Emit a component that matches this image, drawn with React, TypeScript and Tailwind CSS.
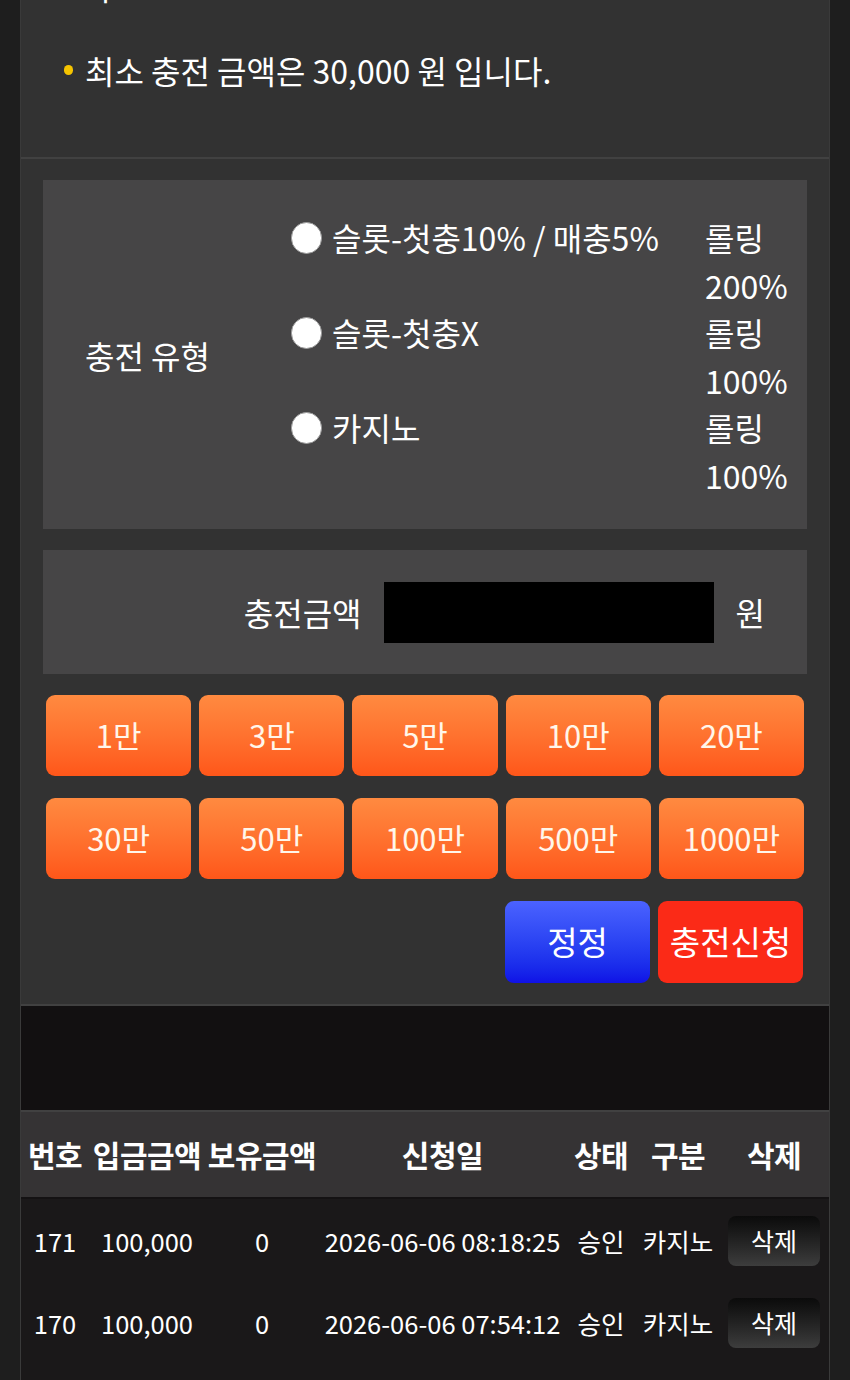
const amounts = ["1만", "3만", "5만", "10만", "20만", "30만", "50만", "100만", "500만", "1000만"];

const types = [
  { label: "슬롯-첫충10% / 매충5%", rolling: "200%" },
  { label: "슬롯-첫충X", rolling: "100%" },
  { label: "카지노", rolling: "100%" },
];

const rows = [
  { no: 171, amount: "100,000", balance: "0", date: "2026-06-06 08:18:25", status: "승인", kind: "카지노" },
  { no: 170, amount: "100,000", balance: "0", date: "2026-06-06 07:54:12", status: "승인", kind: "카지노" },
];

const cols = "grid grid-cols-[68px_116px_114px_247px_70px_84px_108px]";

export default function App() {
  return (
    <div className="min-h-[1380px] bg-[#1e1e1e] font-['Noto_Sans_CJK_KR',sans-serif] text-white overflow-hidden">
      <div className="ml-[20px] w-[810px] border-x border-[#3a3a3a]">
        {/* notice */}
        <div className="h-[157px] bg-[#323232] overflow-hidden">
          <p className="-mt-[36px] pl-[62px] text-[32px] leading-[44px]">다.</p>
          <div className="mt-[40px] flex items-center pl-[43px] gap-[12px]">
            <span className="w-[9px] h-[10px] rounded-full bg-[#f5c400]" />
            <span className="text-[32px] leading-[44px]">최소 충전 금액은 30,000 원 입니다.</span>
          </div>
        </div>

        {/* form */}
        <div className="bg-[#323232] border-t-2 border-b-2 border-[#414141] px-[22px] pt-[21px] pb-[21px]">
          <div className="h-[349px] bg-[#464546] flex items-center">
            <div className="w-[248px] pl-[42px] text-[32px]">충전 유형</div>
            <div className="flex flex-col pt-[4px]">
              {types.map((t) => (
                <div key={t.label} className="flex items-start text-[32px] leading-[47.5px]">
                  <div className="w-[414px] flex items-center gap-[10px] h-[47.5px]">
                    <span className="w-[31px] h-[32px] rounded-full bg-white border border-[#9a9a9a]" />
                    <span>{t.label}</span>
                  </div>
                  <div className="w-[90px]">
                    <div>롤링</div>
                    <div>{t.rolling}</div>
                  </div>
                </div>
              ))}
            </div>
          </div>

          <div className="mt-[21px] h-[124px] bg-[#464546] flex items-center justify-end pr-[42px] gap-[22px] text-[32px]">
            <span>충전금액</span>
            <div className="w-[330px] h-[61px] bg-black" />
            <span>원</span>
          </div>

          <div className="mt-[21px] px-[3px] grid grid-cols-5 gap-x-[8px] gap-y-[22px]">
            {amounts.map((a) => (
              <button
                key={a}
                className="h-[81px] rounded-[9px] bg-gradient-to-b from-[#ff8a40] to-[#ff5619] text-[31px] text-[#fff6ea]"
              >
                {a}
              </button>
            ))}
          </div>

          <div className="mt-[22px] pr-[4px] flex justify-end gap-[8px]">
            <button className="w-[145px] h-[82px] rounded-[9px] bg-gradient-to-b from-[#4b62ff] to-[#1010e6] text-[33px]">
              정정
            </button>
            <button className="w-[145px] h-[82px] rounded-[9px] bg-[#fb2a17] text-[33px]">
              충전신청
            </button>
          </div>
        </div>

        <div className="h-[104px] bg-[#121011]" />

        {/* history */}
        <div className={`${cols} h-[87px] items-center bg-[#353334] border-t-2 border-[#414141] font-bold text-[30px] text-center tracking-[-0.5px]`}>
          <span>번호</span>
          <span>입금금액</span>
          <span>보유금액</span>
          <span>신청일</span>
          <span>상태</span>
          <span>구분</span>
          <span>삭제</span>
        </div>
        <div className="bg-[#1a1819] pt-[1px] pb-[44px] border-t-2 border-[#141213]">
          {rows.map((r) => (
            <div key={r.no} className={`${cols} h-[82px] items-center text-center text-[25.5px]`}>
              <span>{r.no}</span>
              <span>{r.amount}</span>
              <span>{r.balance}</span>
              <span className="whitespace-nowrap">{r.date}</span>
              <span>{r.status}</span>
              <span>{r.kind}</span>
              <span className="flex justify-center">
                <button className="w-[92px] h-[50px] rounded-[8px] bg-gradient-to-b from-[#0b0b0b] to-[#3d3d3d] text-[25px]">
                  삭제
                </button>
              </span>
            </div>
          ))}
        </div>
      </div>
    </div>
  );
}
